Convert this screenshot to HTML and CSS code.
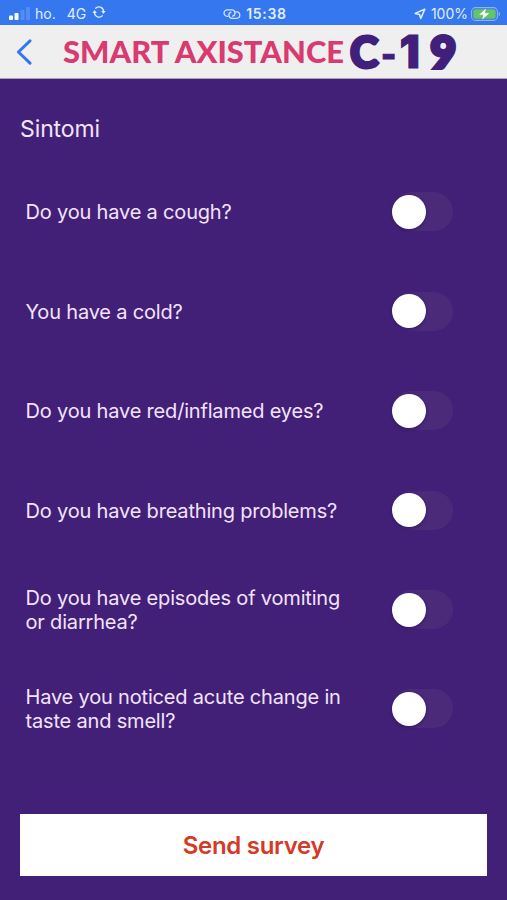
FILE: index.html
```html
<!DOCTYPE html>
<html lang="en">
<head>
  <meta charset="UTF-8">
  <meta name="viewport" content="width=device-width, initial-scale=1.0">
  <title>Smart Axistance C-19</title>
  <link rel="stylesheet" href="styles.css">
</head>
<body>
  <div class="status">
    <div class="status_left">
      <svg class="signal" width="22" height="14" viewBox="0 0 22 14" fill="white">
        <rect x="0" y="8.5" width="4" height="4.5" rx="1"/>
        <rect x="5.5" y="6" width="4" height="7" rx="1"/>
        <rect x="11.5" y="3" width="4" height="10" rx="1" opacity=".16"/>
        <rect x="17" y="0" width="4" height="13" rx="1" opacity=".16"/>
      </svg>
      <span class="carrier">ho.</span>
      <span class="network">4G</span>
      <svg class="sync" width="14" height="12" viewBox="0 0 14 12" fill="none" stroke="#e3edff" stroke-width="1.3">
        <path d="M3.3 2.6A4.6 4.6 0 0 1 11.5 5.6M10.7 9.4A4.6 4.6 0 0 1 2.5 6.4"/>
        <path d="M9.2 5h4.4L11.4 7.9zM.4 7h4.4L2.6 4.1z" fill="#e3edff" stroke="none"/>
      </svg>
    </div>
    <div class="status_time">
      <svg width="18" height="12" viewBox="0 0 18 12" fill="none" stroke="#d3e2fd" stroke-width="1.3" stroke-linecap="round">
        <path d="M5 8.3H4.2A3.2 3.2 0 0 1 4.2 1.9H8.8A3.2 3.2 0 0 1 9.6 8.2"/>
        <path d="M12.6 3.9H13.6A3.2 3.2 0 0 1 13.6 10.3H9A3.2 3.2 0 0 1 8 4.1"/>
      </svg>
      <span>15:38</span>
    </div>
    <div class="status_right">
      <svg class="location" width="12" height="12" viewBox="0 0 12 12" fill="none" stroke="#e3edff" stroke-width="1.5" stroke-linejoin="round">
        <path d="M10.8 1.1L1.2 5.4L5.5 6.4L6.8 10.4z"/>
      </svg>
      <span class="percent">100%</span>
      <svg class="battery" width="30" height="14" viewBox="0 0 30 14">
        <rect x=".6" y=".6" width="25.8" height="12.8" rx="4" fill="none" stroke="#8fb0ec" stroke-width="1.1"/>
        <rect x="2.3" y="2.2" width="22.4" height="9.6" rx="2.4" fill="#65c466"/>
        <path d="M27.7 4.8c2 .8 2 3.6 0 4.4z" fill="#8fb0ec"/>
        <path d="M15 1.4L8.2 7.8h4.2L11.2 12.6L18.2 6.2H13.8z" fill="white"/>
      </svg>
    </div>
  </div>

  <header class="navbar">
    <svg class="back" width="16" height="26" viewBox="0 0 16 26" fill="none" stroke="#3478f0" stroke-width="3" stroke-linecap="round" stroke-linejoin="round">
      <path d="M14 1.8L2.4 13L14 24.2"/>
    </svg>
    <svg class="logo" width="430" height="53" viewBox="0 0 430 53">
      <text class="logo_name" x="2" y="37.5" textLength="281" lengthAdjust="spacingAndGlyphs">SMART AXISTANCE</text>
      <text class="logo_code" y="43"><tspan x="289">C</tspan><tspan class="dash" x="320" y="40.5">-</tspan><tspan class="one" x="338.5" y="43">1</tspan><tspan class="nine" x="369.5" y="43">9</tspan></text>
    </svg>
  </header>

  <main>
    <h1>Sintomi</h1>
    <div class="questions">
      <label class="question"><span class="text">Do you have a cough?</span><span class="toggle"><span class="knob"></span></span></label>
      <label class="question"><span class="text">You have a cold?</span><span class="toggle"><span class="knob"></span></span></label>
      <label class="question"><span class="text">Do you have red/inflamed eyes?</span><span class="toggle"><span class="knob"></span></span></label>
      <label class="question"><span class="text">Do you have breathing problems?</span><span class="toggle"><span class="knob"></span></span></label>
      <label class="question"><span class="text">Do you have episodes of vomiting<br>or diarrhea?</span><span class="toggle"><span class="knob"></span></span></label>
      <label class="question"><span class="text">Have you noticed acute change in<br>taste and smell?</span><span class="toggle"><span class="knob"></span></span></label>
    </div>
    <button type="button" class="send">Send survey</button>
  </main>
</body>
</html>
```
FILE: styles.css
```css
*{
  margin: 0;
  padding: 0;
  box-sizing: border-box;
}
body{
  height: 900px;
  background-color: #422078;
  font-family: Inter, "Liberation Sans", sans-serif;
  color: #f3e3fb;
  overflow: hidden;
}
.status{
  display: grid;
  grid-template-columns: 1fr auto 1fr;
  align-items: center;
  height: 25px;
  padding: 2px 6px 0 9px;
  background-color: #3477ee;
  color: #e3edff;
  font-size: 14px;
}
.status svg{
  display: block;
}
.status_left, .status_time, .status_right{
  display: flex;
  align-items: center;
}
.signal{
  margin-right: 4px;
}
.network{
  margin-left: 11px;
}
.sync{
  margin: 0 0 3px 6px;
}
.status_time{
  gap: 5px;
  font-weight: 600;
  letter-spacing: .7px;
}
.status_right{
  justify-content: flex-end;
}
.percent{
  margin: 0 3px 0 5px;
}
.navbar{
  display: flex;
  align-items: center;
  height: 54px;
  padding-left: 16px;
  background-color: #efefef;
  border-bottom: 1px solid #aaa3b5;
}
.back{
  flex-shrink: 0;
}
.logo{
  flex-shrink: 0;
  margin-left: 29px;
}
.logo_name{
  font: 900 30px Lato, sans-serif;
  fill: #d93a70;
}
.logo_code{
  font: 900 43px Lato, sans-serif;
  fill: #40207a;
  stroke: #40207a;
  stroke-width: 3px;
}
.dash{
  font: 900 32px Inter, sans-serif;
  stroke-width: 1px;
}
.one{
  font: 900 45px Inter, sans-serif;
  stroke-width: 1px;
}
.nine{
  font-size: 44px;
  stroke-width: 4px;
}
main{
  padding: 36px 20px 0;
}
h1{
  font-size: 23px;
  font-weight: 400;
  line-height: 28px;
  letter-spacing: -.1px;
}
.questions{
  margin-top: 19.3px;
  padding: 0 34.5px 0 5.5px;
}
.question{
  display: flex;
  align-items: center;
  justify-content: space-between;
  height: 99.4px;
  font-size: 20px;
  line-height: 24px;
  letter-spacing: -.18px;
}
.text{
  padding-top: 1px;
  white-space: nowrap;
}
.toggle{
  display: flex;
  align-items: center;
  width: 61px;
  height: 39px;
  border-radius: 20px;
  background-color: #4a2a79;
}
.knob{
  width: 34px;
  height: 34px;
  border-radius: 50%;
  background-color: white;
  box-shadow: 0 1px 3px rgba(30, 5, 70, .5);
}
.send{
  display: block;
  width: 467px;
  height: 62px;
  margin-top: 55.8px;
  border: none;
  background-color: white;
  color: #d33a27;
  font: 600 24px Inter, sans-serif;
  letter-spacing: -.3px;
}
```
